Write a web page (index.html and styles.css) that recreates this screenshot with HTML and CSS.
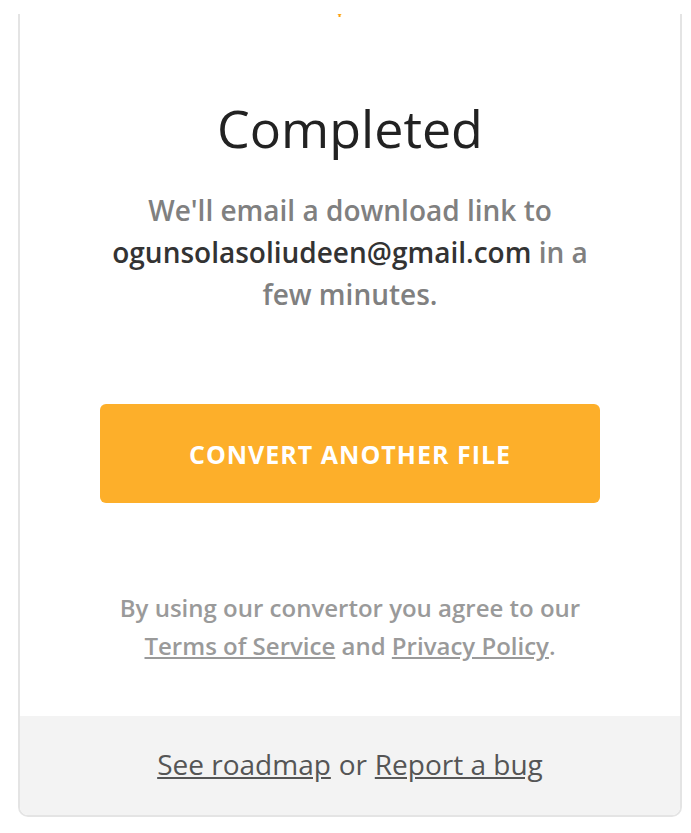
FILE: index.html
```html
<!DOCTYPE html>
<html lang="en">
<head>
  <meta charset="UTF-8" />
  <meta name="viewport" content="width=device-width, initial-scale=1.0"/>
  <title>Completed</title>
  <link rel="stylesheet" href="styles.css">
</head>
<body>
  <div class="page">
    <div class="card">
      <div class="tip">
        <svg width="7" height="4" viewBox="0 0 7 4"><path d="M0 0 H7 L4.5 2 V4 H2.5 V2 Z" fill="#fca312"/></svg>
      </div>

      <div class="content">
        <h1>Completed</h1>
        <p class="message">
          We'll email a download link to
          <span class="email">ogunsolasoliudeen@gmail.com</span> in a few minutes.
        </p>

        <button class="convert-btn">Convert another file</button>

        <p class="terms">
          By using our convertor you agree to our
          <a href="#">Terms of Service</a> and <a href="#">Privacy Policy</a>.
        </p>
      </div>

      <div class="footer">
        <a href="#">See roadmap</a> or <a href="#">Report a bug</a>
      </div>
    </div>
  </div>
</body>
</html>
```

FILE: styles.css
```css
body {
  margin: 0;
  font-family: 'Open Sans', 'Noto Sans', sans-serif;
  background-color: #fff;
  color: #333;
}

.page {
  padding: 14px 0 17px 18px;
}

.card {
  width: 660px;
  border: 2px solid #e4e4e4;
  border-top: none;
  border-radius: 0 0 10px 10px;
  background-color: white;
  overflow: hidden;
}

.tip {
  display: flex;
  justify-content: center;
  margin-top: -1px;
  height: 4px;
  padding-right: 22px;
}

.tip svg {
  display: block;
}

.content {
  padding: 80px 80px 51px;
  text-align: center;
}

h1 {
  margin: 0;
  font-size: 52px;
  font-weight: 400;
  line-height: 62px;
  color: #222;
}

.message {
  margin: 30px 0 0;
  font-size: 28px;
  font-weight: 600;
  line-height: 42px;
  color: #808080;
}

.email {
  color: #333;
}

.convert-btn {
  display: block;
  width: 500px;
  height: 99px;
  margin: 89px auto 0;
  background-color: #fdaf2a;
  color: white;
  font-family: inherit;
  font-size: 25px;
  font-weight: 700;
  letter-spacing: 1px;
  text-transform: uppercase;
  border: none;
  border-radius: 6px;
  cursor: pointer;
}

.terms {
  margin: 86px 0 0;
  font-size: 24px;
  font-weight: 600;
  line-height: 38px;
  color: #9a9a9a;
}

.terms a {
  color: #9a9a9a;
  text-decoration: underline;
}

.footer {
  background-color: #f3f3f3;
  height: 99px;
  box-sizing: border-box;
  padding-bottom: 4px;
  display: flex;
  justify-content: center;
  align-items: center;
  gap: 0.28em;
  font-size: 28px;
  color: #555;
}

.footer a {
  color: #555;
  text-decoration: underline;
}
```
